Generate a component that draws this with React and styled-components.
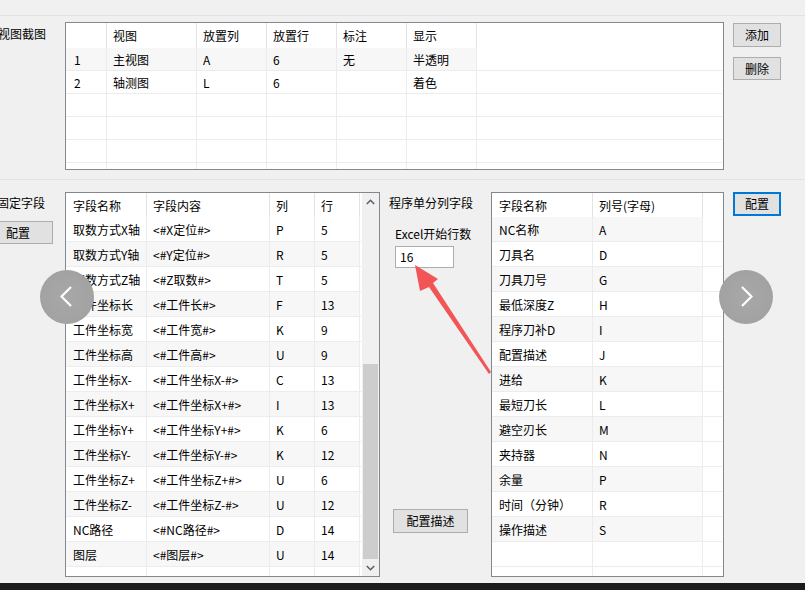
import React from 'react';
import styled, { createGlobalStyle, css } from 'styled-components';

const GlobalStyle = createGlobalStyle`
  html, body { margin: 0; padding: 0; background: #f0f0f0; }
  body {
    font-family: "Noto Sans CJK SC", "Microsoft YaHei", "Noto Sans", sans-serif;
    font-size: 12px;
    color: #000;
  }
  * { box-sizing: border-box; }
`;

const Page = styled.div`
  position: relative;
  width: 805px;
  height: 590px;
  overflow: hidden;
  background: #f0f0f0;
  display: flex;
  flex-direction: column;
`;

const TopStrip = styled.div`
  flex: none;
  height: 16px;
  border-bottom: 1px solid #e3e3e3;
`;

const TopSection = styled.section`
  flex: none;
  height: 164px;
  display: flex;
  align-items: flex-start;
  padding-top: 6px;
  border-bottom: 1px solid #e3e3e3;
`;

const BottomSection = styled.section`
  flex: none;
  height: 403px;
  display: flex;
  align-items: flex-start;
  padding-top: 12px;
`;

const BottomBar = styled.div`
  flex: 1;
  background: #1b1b1b;
`;

const SideColumn = styled.div`
  flex: none;
  width: 65px;
  display: flex;
  flex-direction: column;
  align-items: flex-start;
`;

const SideLabel = styled.div`
  margin-left: ${p => p.$left}px;
  margin-top: ${p => p.$top}px;
  line-height: 20px;
  white-space: nowrap;
`;

const Button = styled.button`
  flex: none;
  width: ${p => p.$w}px;
  height: ${p => p.$h || 23}px;
  margin: ${p => p.$margin || '0'};
  padding: 0;
  font: inherit;
  font-size: 12px;
  color: #000;
  background: #e1e1e1;
  border: 1px solid #adadad;
  display: flex;
  align-items: center;
  justify-content: center;
  line-height: 1;
  ${p => p.$focused && css`
    border: 2px solid #0078d7;
  `}
`;

const ButtonColumn = styled.div`
  flex: none;
  display: flex;
  flex-direction: column;
  gap: ${p => p.$gap || 10}px;
  padding-left: 9px;
  padding-top: ${p => p.$top || 0}px;
`;

const Frame = styled.div`
  flex: none;
  width: ${p => p.$w}px;
  height: ${p => p.$h}px;
  background: #fff;
  border: 1px solid #828790;
  display: flex;
  overflow: hidden;
`;

const GridBody = styled.div`
  flex: 1;
  min-width: 0;
  display: flex;
  flex-direction: column;
  overflow: hidden;
`;

const Row = styled.div`
  flex: none;
  display: flex;
  height: ${p => p.$h}px;
  background: ${p => (p.$shade ? '#f7f7f7' : '#fff')};
`;

const Cell = styled.div`
  flex: ${p => (p.$fill ? '1 1 auto' : 'none')};
  width: ${p => (p.$fill ? 'auto' : `${p.$w}px`)};
  padding-left: ${p => p.$pad}px;
  display: flex;
  align-items: center;
  white-space: nowrap;
  overflow: hidden;
  border-right: 1px solid ${p => (p.$fill ? 'transparent' : '#ececec')};
  border-bottom: 1px solid #ececec;
  background: ${p => (p.$fill ? '#fff' : 'transparent')};
`;

const HeadCell = styled(Cell)`
  border-bottom: none;
  border-right: 1px solid ${p => (p.$fill ? 'transparent' : '#e3e3e3')};
  background: #fff;
`;

const ScrollBar = styled.div`
  flex: none;
  width: 17px;
  background: #f0f0f0;
  display: flex;
  flex-direction: column;
`;

const ScrollArrow = styled.div`
  flex: none;
  height: 17px;
  display: flex;
  align-items: center;
  justify-content: center;
`;

const ScrollTrack = styled.div`
  flex: 1;
  display: flex;
  flex-direction: column;
  justify-content: flex-end;
  align-items: center;
`;

const ScrollThumb = styled.div`
  width: 15px;
  height: ${p => p.$h}px;
  background: #cdcdcd;
`;

const MiddleColumn = styled.div`
  flex: none;
  width: 111px;
  display: flex;
  flex-direction: column;
  align-items: flex-start;
  padding-left: 9px;
`;

const Caption = styled.div`
  line-height: 20px;
  white-space: nowrap;
  margin-top: ${p => p.$top || 0}px;
  margin-left: ${p => p.$left || 0}px;
`;

const NumberInput = styled.div`
  width: 59px;
  height: 22px;
  margin-top: 2px;
  margin-left: 6px;
  background: #fff;
  border: 1px solid #adadad;
  padding-left: 4px;
  display: flex;
  align-items: center;
  line-height: 1;
`;

const NavCircle = styled.div`
  position: absolute;
  top: 270px;
  left: ${p => p.$x}px;
  width: 54px;
  height: 54px;
  border-radius: 50%;
  background: radial-gradient(circle at 50% 50%, #a8a8a8 0%, #a2a2a2 70%, #9c9c9c 100%);
  display: flex;
  align-items: center;
  justify-content: center;
`;

const ArrowOverlay = styled.svg`
  position: absolute;
  left: 410px;
  top: 260px;
  overflow: visible;
`;

function DataGrid({ w, h, cols, headers, rows, headH, rowH, shadeOdd, scroll }) {
  return (
    <Frame $w={w} $h={h}>
      <GridBody>
        <Row $h={headH}>
          {cols.map((c, i) => (
            <HeadCell key={i} $w={c.w} $pad={c.pad} $fill={c.fill}>
              {headers[i] || ''}
            </HeadCell>
          ))}
        </Row>
        {rows.map((r, ri) => (
          <Row key={ri} $h={rowH} $shade={r.length > 0 && (ri % 2 === (shadeOdd ? 0 : 1))}>
            {cols.map((c, i) => (
              <Cell key={i} $w={c.w} $pad={c.pad} $fill={c.fill}>
                {r[i] || ''}
              </Cell>
            ))}
          </Row>
        ))}
      </GridBody>
      {scroll && (
        <ScrollBar>
          <ScrollArrow>
            <svg width="9" height="6" viewBox="0 0 9 6">
              <polyline points="0.8,5 4.5,1.3 8.2,5" fill="none" stroke="#606060" strokeWidth="1.6" />
            </svg>
          </ScrollArrow>
          <ScrollTrack>
            <ScrollThumb $h={scroll.thumb} />
          </ScrollTrack>
          <ScrollArrow>
            <svg width="9" height="6" viewBox="0 0 9 6">
              <polyline points="0.8,1 4.5,4.7 8.2,1" fill="none" stroke="#606060" strokeWidth="1.6" />
            </svg>
          </ScrollArrow>
        </ScrollBar>
      )}
    </Frame>
  );
}

const viewCols = [
  { w: 41, pad: 8 },
  { w: 90, pad: 6 },
  { w: 70, pad: 6 },
  { w: 70, pad: 6 },
  { w: 70, pad: 6 },
  { w: 70, pad: 6 },
  { fill: true, pad: 0 },
];
const viewHeaders = ['', '视图', '放置列', '放置行', '标注', '显示'];
const viewRows = [
  ['1', '主视图', 'A', '6', '无', '半透明'],
  ['2', '轴测图', 'L', '6', '', '着色'],
  [], [], [], [],
];

const fixedCols = [
  { w: 81, pad: 7 },
  { w: 123, pad: 6 },
  { w: 45, pad: 6 },
  { w: 45, pad: 6 },
  { fill: true, pad: 0 },
];
const fixedHeaders = ['字段名称', '字段内容', '列', '行'];
const fixedRows = [
  ['取数方式X轴', '<#X定位#>', 'P', '5'],
  ['取数方式Y轴', '<#Y定位#>', 'R', '5'],
  ['取数方式Z轴', '<#Z取数#>', 'T', '5'],
  ['工件坐标长', '<#工件长#>', 'F', '13'],
  ['工件坐标宽', '<#工件宽#>', 'K', '9'],
  ['工件坐标高', '<#工件高#>', 'U', '9'],
  ['工件坐标X-', '<#工件坐标X-#>', 'C', '13'],
  ['工件坐标X+', '<#工件坐标X+#>', 'I', '13'],
  ['工件坐标Y+', '<#工件坐标Y+#>', 'K', '6'],
  ['工件坐标Y-', '<#工件坐标Y-#>', 'K', '12'],
  ['工件坐标Z+', '<#工件坐标Z+#>', 'U', '6'],
  ['工件坐标Z-', '<#工件坐标Z-#>', 'U', '12'],
  ['NC路径', '<#NC路径#>', 'D', '14'],
  ['图层', '<#图层#>', 'U', '14'],
  [],
];

const progCols = [
  { w: 101, pad: 7 },
  { w: 110, pad: 6 },
  { fill: true, pad: 0 },
];
const progHeaders = ['字段名称', '列号(字母)'];
const progRows = [
  ['NC名称', 'A'],
  ['刀具名', 'D'],
  ['刀具刀号', 'G'],
  ['最低深度Z', 'H'],
  ['程序刀补D', 'I'],
  ['配置描述', 'J'],
  ['进给', 'K'],
  ['最短刀长', 'L'],
  ['避空刃长', 'M'],
  ['夹持器', 'N'],
  ['余量', 'P'],
  ['时间（分钟）', 'R'],
  ['操作描述', 'S'],
  [],
  [],
];

export default function App() {
  return (
    <>
      <GlobalStyle />
      <Page>
        <TopStrip />
        <TopSection>
          <SideColumn>
            <SideLabel $left={-2} $top={2}>视图截图</SideLabel>
          </SideColumn>
          <DataGrid
            w={659}
            h={148}
            cols={viewCols}
            headers={viewHeaders}
            rows={viewRows}
            headH={25}
            rowH={23}
            shadeOdd
          />
          <ButtonColumn $top={1} $gap={10}>
            <Button $w={48} $h={24}>添加</Button>
            <Button $w={48} $h={23}>删除</Button>
          </ButtonColumn>
        </TopSection>
        <BottomSection>
          <SideColumn>
            <SideLabel $left={-3} $top={1}>固定字段</SideLabel>
            <Button $w={70} $h={23} $margin="8px 0 0 -17px">配置</Button>
          </SideColumn>
          <DataGrid
            w={315}
            h={385}
            cols={fixedCols}
            headers={fixedHeaders}
            rows={fixedRows}
            headH={24}
            rowH={25}
            scroll={{ thumb: 195 }}
          />
          <MiddleColumn>
            <Caption $top={1}>程序单分列字段</Caption>
            <Caption $top={11} $left={6}>Excel开始行数</Caption>
            <NumberInput>16</NumberInput>
            <Button $w={75} $h={24} $margin="241px 0 0 4px">配置描述</Button>
          </MiddleColumn>
          <DataGrid
            w={233}
            h={385}
            cols={progCols}
            headers={progHeaders}
            rows={progRows}
            headH={24}
            rowH={25}
            shadeOdd
          />
          <ButtonColumn>
            <Button $w={48} $h={24} $focused>配置</Button>
          </ButtonColumn>
        </BottomSection>
        <BottomBar />

        <NavCircle $x={40}>
          <svg width="14" height="24" viewBox="0 0 14 24">
            <polyline points="11,2 1.5,11.5 11,21" fill="none" stroke="#fff" strokeWidth="2.2" />
          </svg>
        </NavCircle>
        <NavCircle $x={719}>
          <svg width="14" height="24" viewBox="0 0 14 24">
            <polyline points="3,2 12.5,11.5 3,21" fill="none" stroke="#fff" strokeWidth="2.2" />
          </svg>
        </NavCircle>

        <ArrowOverlay width="85" height="120" viewBox="0 0 85 120">
          <polygon
            points="5,5 10,31 19,27 79,114 81,112 23,23 28,19"
            fill="#f25555"
          />
        </ArrowOverlay>
      </Page>
    </>
  );
}
